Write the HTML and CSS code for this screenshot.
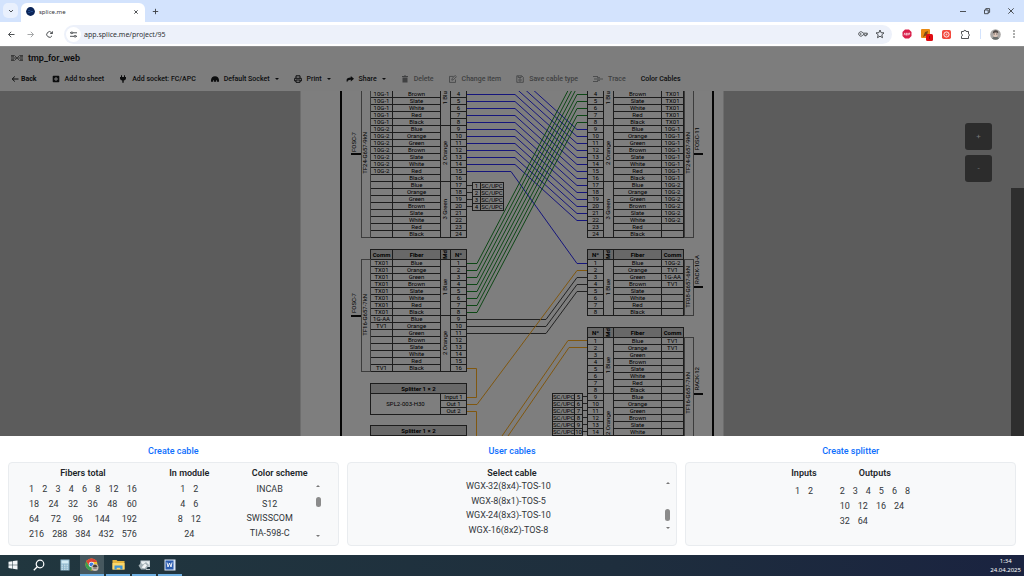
FILE: index.html
```html
<!DOCTYPE html>
<html lang="en">
<head>
<meta charset="utf-8">
<title>splice.me</title>
<link rel="stylesheet" href="styles.css">
</head>
<body>
<div class="tabs">
  <button class="tab-search" aria-label="Search tabs"><svg width="8" height="8" viewBox="0 0 8 8"><path class="ln" d="M2 3l2 2 2-2"/></svg></button>
  <div class="tab">
    <svg width="9" height="9" viewBox="0 0 9 9"><circle cx="4.500" cy="4.500" r="4.400" fill="#0b2559"/><path d="M2 3.500h2l1 1h2M2 5.500h2l1-1" stroke="#2f5fa8" stroke-width=".6" fill="none"/></svg>
    <span class="tab-name">splice.me</span>
    <button aria-label="Close tab"><svg width="8" height="8" viewBox="0 0 8 8"><path class="ln" d="M2.300 2.300l3.400 3.400M5.700 2.300L2.300 5.700"/></svg></button>
  </div>
  <button class="tab-new" aria-label="New tab"><svg width="9" height="9" viewBox="0 0 9 9"><path class="ln" d="M4.500 1.800v5.400M1.800 4.500h5.400"/></svg></button>
  <div class="win">
    <button aria-label="Minimize"><svg width="8" height="8" viewBox="0 0 8 8"><path class="ln" d="M1 4.500h6"/></svg></button>
    <button aria-label="Restore"><svg width="8" height="8" viewBox="0 0 8 8"><path class="ln" d="M1.500 3h3.700v3.700H1.500zM2.800 3V1.600h3.800v3.800H5.200"/></svg></button>
    <button aria-label="Close"><svg width="8" height="8" viewBox="0 0 8 8"><path class="ln" d="M1.300 1.300l5.400 5.400M6.700 1.300L1.300 6.700"/></svg></button>
  </div>
</div>

<div class="nav">
  <div class="nav-btns">
    <button aria-label="Back"><svg width="9" height="9" viewBox="0 0 9 9"><path class="ln" d="M7.500 4.500H1.700M4.200 1.800L1.500 4.500l2.700 2.700"/></svg></button>
    <button aria-label="Forward" class="dim"><svg width="9" height="9" viewBox="0 0 9 9"><path class="ln" d="M1.500 4.500h5.800M4.800 1.800l2.700 2.700-2.700 2.700"/></svg></button>
    <button aria-label="Reload"><svg width="9" height="9" viewBox="0 0 9 9"><path class="ln" d="M7 5.800A2.800 2.800 0 1 1 6.600 2.600L7.300 3.400M7.400 1.300v2.200H5.200"/></svg></button>
  </div>
  <div class="url">
    <span class="site"><svg width="9" height="9" viewBox="0 0 9 9"><path class="ln" d="M1 2.800h1M4 2.800h4M1 6.300h4M7 6.300h1"/><circle class="ln" cx="2.900" cy="2.800" r=".9"/><circle class="ln" cx="6.100" cy="6.300" r=".9"/></svg></span>
    <input aria-label="Address" value="app.splice.me/project/95">
    <svg width="11" height="8" viewBox="0 0 11 8"><path class="ln" d="M6 3.200h4.300v1.500H9.200v1.100H7.800V4.700H6A2.200 2.200 0 1 1 6 3.200z"/><circle cx="3.700" cy="4" r=".8" fill="#444746"/></svg>
    <svg width="10" height="10" viewBox="0 0 10 10"><path class="ln" d="M5 1l1.100 2.700 2.900.2-2.200 1.900.7 2.900L5 7.200 2.500 8.700l.7-2.900L1 3.900l2.900-.2z"/></svg>
  </div>
  <div class="ext">
    <svg width="10" height="10" viewBox="0 0 10 10"><path d="M3 .6h4L9.500 3v4L7 9.400H3L.5 7V3z" fill="#d91f4a"/><path d="M2 6.300l.8-2.400.8 2.400M4.500 4v2.200h.8V4zM6.700 6.300V4h1v1.200h-1" stroke="#fff" stroke-width=".6" fill="none"/></svg>
    <svg width="12" height="13" viewBox="0 0 12 13"><rect y="1" width="9" height="9" rx="1" fill="#e98a12"/><path d="M2 9l2-5 3-1-1 4z" fill="#7b4a16"/><rect x="5" y="6" width="7" height="7" rx="1.500" fill="#e00d13"/><path d="M8.500 8v3" stroke="#7c0a0c" stroke-width=".8"/></svg>
    <svg width="9" height="9" viewBox="0 0 9 9"><rect width="9" height="9" rx="1.800" fill="#f2493d"/><circle cx="4.500" cy="4.500" r="2.600" fill="none" stroke="#fff" stroke-width=".9"/><circle cx="4.500" cy="4.500" r="1" fill="#fbb"/></svg>
    <svg width="11" height="11" viewBox="0 0 11 11"><path class="ln" d="M1.500 2.500h2.200a1.200 1.200 0 0 1 2.400 0h2.400v2.400a1.200 1.200 0 0 1 0 2.300v2.300h-7V7.400a1.400 1.400 0 0 0 0-2.600z"/></svg>
    <span class="sep"></span>
    <svg width="11" height="11" viewBox="0 0 11 11"><circle cx="5.500" cy="5.500" r="5.300" fill="#aaa8a6"/><path d="M2 9.500Q5.500 5 9 9.500Q5.500 12 2 9.500z" fill="#696e6c"/><ellipse cx="5.500" cy="5.200" rx="2.300" ry="2.900" fill="#dcc5b8"/><path d="M2.800 4.500Q3 1.200 5.800 1.300 8.500 1.400 8.200 4.300 6 2.600 2.800 4.500z" fill="#4d4643"/><path d="M3.500 5h1.500M6 5h1.500" stroke="#444" stroke-width=".7"/></svg>
    <button aria-label="Menu"><svg width="8" height="10" viewBox="0 0 8 10"><g fill="#444746"><circle cx="4" cy="2" r=".8"/><circle cx="4" cy="5" r=".8"/><circle cx="4" cy="8" r=".8"/></g></svg></button>
  </div>
</div>

<header class="app-head">
  <div class="brand">
    <svg width="12" height="8" viewBox="0 0 12 8"><path d="M0 1.500h3.500L8.500 6.500H12M0 6.500h3.500L8.500 1.500H12M0 4h4M8 4h4M0 2.700h3M9 2.700h3M0 5.300h3M9 5.300h3M4 4h4" stroke="#3c3c3c" fill="none"/></svg>
    <h1>tmp_for_web</h1>
  </div>
  <div class="tools">
    <button class="strong"><svg width="8" height="8" viewBox="0 0 8 8"><path d="M7.500 4h-6M3.800 1.500L1.200 4l2.600 2.500" stroke="currentColor" fill="none"/></svg>Back</button>
    <button><svg width="8" height="8" viewBox="0 0 8 8"><path fill-rule="evenodd" fill="currentColor" d="M1.500.7h5q.8 0 .8.800v5q0 .8-.8.800h-5q-.8 0-.8-.8v-5q0-.8.8-.8zM3.500 2v1.500H2v1h1.500V6h1V4.500H6v-1H4.500V2z"/></svg>Add to sheet</button>
    <button><svg width="8" height="8" viewBox="0 0 8 8"><path fill="currentColor" d="M2 .3h1V2h2V.3h1V2h1v1.500Q6.700 5.300 4.700 5.500V7.700H3.300V5.500Q1.300 5.300 1 3.500V2h1z"/></svg>Add socket: FC/APC</button>
    <button><svg width="8" height="8" viewBox="0 0 8 8"><path fill="currentColor" d="M0 6.800V5Q.3 1.200 4 1.200T8 5v1.800H5.800V5.200H5v1.600H3V5.200h-.8v1.600z"/></svg>Default Socket<i></i></button>
    <button><svg width="8" height="8" viewBox="0 0 8 8"><path fill="none" stroke="currentColor" d="M2 3V.8h4V3M2 6H.7V3.300h6.600V6H6M2 5h4v2.300H2z"/></svg>Print<i></i></button>
    <button><svg width="8" height="8" viewBox="0 0 8 8"><path fill="currentColor" d="M4.800 1l3.200 2.700-3.200 2.700V4.700Q1.500 4.400 1 7.200-.8 2.700 4.800 2.600z"/></svg>Share<i></i></button>
    <button class="off"><svg width="8" height="8" viewBox="0 0 8 8"><path fill="currentColor" d="M1 1h2V.4h2V1h2v1H1zM1.500 2.500h5V7.600h-5z"/></svg>Delete</button>
    <button class="off"><svg width="8" height="8" viewBox="0 0 8 8"><path fill="none" stroke="currentColor" stroke-width=".8" d="M4.500 1.400h-4v6h6V4.500M3 3.600L6.200.5l1.200 1.200L4.200 4.900 2.800 5.200z"/></svg>Change item</button>
    <button class="off"><svg width="8" height="8" viewBox="0 0 8 8"><path fill="none" stroke="currentColor" stroke-width=".8" d="M.8.800h5L7.300 2.300v5H.8zM2.200 1v1.500h3V1"/><circle cx="4" cy="5" r="1.200" fill="none" stroke="currentColor" stroke-width=".8"/></svg>Save cable type</button>
    <button class="off"><svg width="10" height="8" viewBox="0 0 10 8"><path fill="none" stroke="currentColor" stroke-width=".8" d="M0 1.500h5M1 4h9M0 6.500h5M4 2.700h3M4 5.300h3"/></svg>Trace</button>
    <button>Color Cables</button>
  </div>
</header>

<main class="stage">
  <div class="sheet" id="sheet"></div>
  <div class="zoom"><button>+</button><button>-</button></div>
  <div class="side"></div>
</main>

<section class="panels">
  <div class="panel">
    <h2>Create cable</h2>
    <div class="card cable">
      <div class="col">
        <h3>Fibers total</h3>
        <div class="nums wide" data-rows="1 2 3 4 6 8 12 16|18 24 32 36 48 60|64 72 96 144 192|216 288 384 432 576"></div>
      </div>
      <div class="col">
        <h3>In module</h3>
        <div class="nums" data-rows="1 2|4 6|8 12|24"></div>
      </div>
      <div class="col">
        <h3>Color scheme</h3>
        <div class="scroller scheme">
          <div class="list"><button>INCAB</button><button>S12</button><button>SWISSCOM</button><button>TIA-598-C</button></div>
          <div class="bar"><b class="up"></b><span class="thumb"></span><b class="down"></b></div>
        </div>
      </div>
    </div>
  </div>
  <div class="panel">
    <h2>User cables</h2>
    <div class="card">
      <div class="col">
        <h3>Select cable</h3>
        <div class="scroller user">
          <div class="list"><button>WGX-32(8x4)-TOS-10</button><button>WGX-8(8x1)-TOS-5</button><button>WGX-24(8x3)-TOS-10</button><button>WGX-16(8x2)-TOS-8</button></div>
          <div class="bar"><b class="up"></b><span class="thumb low"></span><b class="down"></b></div>
        </div>
      </div>
    </div>
  </div>
  <div class="panel">
    <h2>Create splitter</h2>
    <div class="card splitter">
      <div class="col">
        <h3>Inputs</h3>
        <div class="nums" data-rows="1 2"></div>
      </div>
      <div class="col">
        <h3>Outputs</h3>
        <div class="nums start" data-rows="2 3 4 5 6 8|10 12 16 24|32 64"></div>
      </div>
    </div>
  </div>
</section>

<footer class="taskbar">
  <button aria-label="Start"><svg width="10" height="10" viewBox="0 0 10 10"><path fill="#f2f6f8" d="M.5 1.800L4.500 1.200v3.500h-4zM5 1.100L9.500.500v4.200H5zM.5 5.200h4v3.500l-4-.6zM5 5.200h4.500v4.300L5 8.800z"/></svg></button>
  <button aria-label="Search"><svg width="12" height="12" viewBox="0 0 12 12"><circle cx="7" cy="5" r="3.800" fill="none" stroke="#fff" stroke-width="1.200"/><path d="M4.300 7.700L.8 11.200" stroke="#fff" stroke-width="1.300"/></svg></button>
  <button aria-label="Calculator"><svg width="10" height="12" viewBox="0 0 10 12"><rect x=".5" y=".5" width="9" height="11" fill="#8fb7cd"/><rect x="1.500" y="1.500" width="7" height="3" fill="#d3ecf5"/><path d="M1.500 6.200h7M1.500 8.200h7M1.500 10.200h7" stroke="#d7e7ee" stroke-dasharray="1.500 1"/></svg></button>
  <button aria-label="Chrome" class="run active"><svg width="14" height="14" viewBox="0 0 14 14"><circle cx="6.500" cy="6.500" r="6" fill="#f2c02e"/><path d="M1.300 3.500A6 6 0 0 1 12 4H6.500L4 8z" fill="#df4537"/><path d="M1.300 3.500A6 6 0 0 0 6 12.500L8.500 8H4z" fill="#3a9e4f"/><circle cx="6.500" cy="6.500" r="2.700" fill="#fff"/><circle cx="6.500" cy="6.500" r="2.100" fill="#3e7de0"/><circle cx="10" cy="9.500" r="3.500" fill="#c7bdb5"/><path d="M7.500 9Q8 6.500 10 6.500t2.500 2.500z" fill="#473f3b"/><path d="M8.300 10h3.400" stroke="#333" stroke-width=".8"/></svg></button>
  <button aria-label="Explorer" class="run"><svg width="13" height="11" viewBox="0 0 13 11"><path d="M.5 1h4l1 1h7v8.500H.5z" fill="#e7b53d"/><path d="M.5 4h12v6.500H.5z" fill="#fbd76b"/><path d="M2.500 10.500v-4h8v4H8.300V8.700H4.700v1.800z" fill="#3f94d6"/></svg></button>
  <button aria-label="Viewer" class="run"><svg width="13" height="12" viewBox="0 0 13 12"><path d="M2.500 1.500h9.500v6.500H2.500z" fill="#c3ced4"/><path d="M3.500 2.500h7.500v4H3.500z" fill="#e9eff1"/><path d="M.5 6.500L3 4l2 1.500L8 3l3 3-3 4.500H3z" fill="#a2afb5"/><path d="M3.500 8.500L7 4.500l2 2-2.500 3z" fill="#f1f4f5"/><path d="M8 10.500h4" stroke="#b8c2c7"/></svg></button>
  <button aria-label="Word" class="run"><svg width="12" height="12" viewBox="0 0 12 12"><rect x=".5" y=".5" width="11" height="11" fill="#dbe6f6"/><rect x="1.500" y="1.500" width="8" height="9" fill="#2b5cb0"/><path d="M3 3.500l1 4.500 1.500-4L7 8l1-4.500" stroke="#fff" fill="none" stroke-width=".9"/></svg></button>
  <div class="clock"><span>1:34</span><span>24.04.2025</span></div>
</footer>
<script src="app.js"></script>
</body>
</html>
```

FILE: styles.css
```css
* { box-sizing: border-box; }
html, body { height: 100%; }
body {
  margin: 0;
  display: flex;
  flex-direction: column;
  overflow: hidden;
  font-family: Roboto, "Liberation Sans", sans-serif;
  font-size: 9px;
  color: #212529;
  background: #fff;
}
button { font: inherit; color: inherit; background: none; border: 0; padding: 0; display: flex; align-items: center; justify-content: center; }
svg { display: block; flex: none; }
h1, h2, h3 { margin: 0; font-size: 9px; font-weight: 500; line-height: 12px; }
h1, h3 { font-weight: 600; }
.ln { fill: none; stroke: #3c4043; stroke-width: 0.9; }

/* browser window */
.tabs { display: flex; flex: none; height: 22px; background: #d3e3fd; padding-left: 3px; }
.tab-search { width: 15px; height: 15px; margin: 3px 3px 0 0; border-radius: 5px; background: #e9f0fd; }
.tab { display: flex; align-items: center; width: 124px; margin-top: 3px; padding: 0 5px 2px 5px; gap: 4px; background: #fff; border-radius: 6px 6px 0 0; }
.tab-name { flex: 1; font: 6px "Noto Sans", sans-serif; color: #303236; }
.tab-new { width: 21px; }
.win { display: flex; margin-left: auto; padding-right: 9px; gap: 16px; }
.nav { display: flex; flex: none; align-items: center; height: 24px; background: #fff; padding: 0 6px 0 7px; }
.nav-btns { display: flex; gap: 10px; width: 57px; }
.dim { opacity: 0.5; }
.url { display: flex; flex: 1; align-items: center; height: 19px; gap: 7px; padding: 0 7px 0 2px; border-radius: 10px; background: #edf1fa; }
.site { display: flex; align-items: center; justify-content: center; width: 15px; height: 15px; border-radius: 8px; background: #fff; }
.url input { flex: 1; min-width: 0; border: 0; padding: 0; margin-left: -4px; background: none; color: #303236; font: 7px "Noto Sans", sans-serif; }
.ext { display: flex; align-items: center; gap: 9px; padding-left: 10px; }
.sep { width: 1px; height: 10px; background: #d3e3fd; }

/* project header */
.app-head { flex: none; height: 45px; padding: 0 11px; background: #7d7d7d; border-top: 1px solid #8c8c8c; color: #0c0d0e; }
.brand { display: flex; align-items: center; gap: 5px; height: 22px; }
.tools { display: flex; align-items: center; gap: 15px; height: 19px; font-size: 7px; font-weight: 500; white-space: nowrap; }
.tools button { gap: 5px; }
.tools i { border: 2px solid transparent; border-top-color: currentColor; border-bottom: 0; }
.tools .strong { gap: 2px; font-weight: 700; }
.tools .off { color: #404142; }

/* drawing */
.stage { position: relative; flex: 1; min-height: 0; overflow: hidden; display: flex; justify-content: center; background: #5c5c5c; }
.sheet { position: relative; width: 424px; background: #7e7e7e; border: solid #6d6d6d; border-width: 0 1px; font-size: 6px; color: #000; }
.wires { position: absolute; left: -1px; top: 0; }
.wires path { fill: none; stroke: #222; }
.wires .frame { stroke: #050505; stroke-width: 2; }
.wires .blue { stroke: #15157c; }
.wires .green { stroke: #0d4715; }
.wires .orange { stroke: #80570f; }
.wires .tick { stroke: #080808; stroke-width: 2; }
.node { position: absolute; table-layout: fixed; border: solid #1c1c1c; border-width: 1px 0 0 1px; border-spacing: 0; }
.node td, .node th { padding: 0; height: 7px; line-height: 6px; border: solid #1c1c1c; border-width: 0 1px 1px 0; text-align: center; white-space: nowrap; font-weight: 400; overflow: visible; }
.node thead th { height: 10px; line-height: 9px; background: #686868; font-weight: 700; }
.vert { writing-mode: vertical-rl; transform: rotate(180deg); line-height: 8px; display: block; width: 8px; }
.node .cut-top { vertical-align: top; }
.cut-top .vert { margin-top: -3px; }
.node .cut-bottom { vertical-align: bottom; }
.bracket { position: absolute; width: 10px; border: 1px solid #3c3c3c; }
.name { position: absolute; display: flex; align-items: center; justify-content: center; width: 10px; white-space: nowrap; }
.zoom { position: absolute; right: 32px; top: 32px; display: grid; gap: 5px; }
.zoom button { width: 27px; height: 27px; border-radius: 3px; background: #2c2c2c; color: #777; font-size: 8px; }
.side { position: absolute; right: 0; top: 97px; bottom: 0; width: 13px; background: #2e2e2e; }

/* item panels */
.panels { flex: none; display: grid; grid-template-columns: 1fr 1fr 1fr; gap: 8px; padding: 9px 8px 9px; background: #fff; }
h2 { text-align: center; color: #0d6efd; }
.card { display: grid; height: 84px; margin-top: 5px; padding-top: 4px; border: 1px solid #e9ecef; border-radius: 4px; background: #f8f9fa; }
.cable { grid-template-columns: 148fr 65fr 116fr; }
.splitter { grid-template-columns: auto auto; justify-content: center; gap: 23px; }
h3 { text-align: center; }
.nums { display: grid; padding-top: 2px; color: #33373b; }
.nums div { display: flex; justify-content: center; gap: 8px; height: 15px; }
.wide { width: 108px; margin: 0 auto; }
.wide div { justify-content: space-between; gap: 0; }
.splitter .nums { padding-top: 4px; }
.start div { justify-content: flex-start; }
.scroller { display: grid; grid-template-columns: 1fr 5px; color: #33373b; }
.scheme { padding: 3px 17px 0 2px; }
.user { padding: 0 6px 0 4px; }
.list { display: grid; height: 58px; }
.bar { display: flex; flex-direction: column; align-items: center; padding: 3px 0; }
.up { border: 2px solid transparent; border-bottom-color: #777; border-top: 0; }
.down { border: 2px solid transparent; border-top-color: #777; border-bottom: 0; margin-top: auto; }
.thumb { width: 5px; height: 10px; margin-top: 10px; border-radius: 3px; background: #8b8b8b; }
.low { height: 12px; margin-top: 25px; }
.user .bar { padding-bottom: 8px; }

/* taskbar */
.taskbar { display: flex; flex: none; height: 21px; background: linear-gradient(90deg, #21373f, #1e2e3d 60%, #1a2340); color: #fff; }
.taskbar button { width: 26px; border-bottom: 2px solid transparent; }
.taskbar .run { width: 24px; margin: 0 1px; border-bottom-color: #6fb0e3; }
.taskbar .active { margin-left: 2px; background: #46585f; }
.clock { display: flex; flex-direction: column; margin-left: auto; padding: 2px 3px 0 0; text-align: center; font: 6px/9px "Noto Sans", sans-serif; }
```

FILE: app.js
```js
const COLORS = ['Blue', 'Orange', 'Green', 'Brown', 'Slate', 'White', 'Red', 'Black'];
const sheet = document.getElementById('sheet');
const ROW = 7;

// Drawing coordinates are measured from the sheet's top left corner.
const rep = (value, n) => Array(n).fill(value);

function addTable(x, y, cols, html) {
  const table = document.createElement('table');
  table.className = 'node';
  table.style.left = x - 1 + 'px';
  table.style.top = y + 'px';
  table.style.width = cols.reduce((a, b) => a + b, 1) + 'px';
  table.innerHTML = '<colgroup>' + cols.map(w => `<col style="width:${w}px">`).join('') + '</colgroup>' + html;
  sheet.append(table);
}

// Only the rows inside the viewport are built, starting at fiber number `from`.
function cable({ x, y, comm, mirrored, from = 1 }) {
  const order = cells => (mirrored ? cells.reverse() : cells).join('');
  const last = from + comm.length - 1;
  let html = from === 1
    ? '<thead><tr>' + order(['<th>Comm</th>', '<th>Fiber</th>', '<th><span class="vert">Md</span></th>', '<th>Nº</th>']) + '</tr></thead>'
    : '';
  html += '<tbody>';
  comm.forEach((c, i) => {
    const n = from + i;
    const group = Math.floor((n - 1) / 8);
    let mod = '';
    if (i === 0 || n % 8 === 1) {
      const end = Math.min(group * 8 + 8, last);
      const cut = n % 8 !== 1 ? 'cut-top' : end % 8 ? 'cut-bottom' : '';
      mod = `<th class="${cut}" rowspan="${end - n + 1}"><span class="vert">${group + 1} ${COLORS[group]}</span></th>`;
    }
    html += '<tr>' + order([`<td>${c}</td>`, `<td>${COLORS[(n - 1) % 8]}</td>`, mod, `<td>${n}</td>`]) + '</tr>';
  });
  addTable(x, y, mirrored ? [16, 10, 48, 22] : [22, 48, 10, 16], html + '</tbody>');
}

function splitter(y, name, ports) {
  let html = '<thead><tr><th colspan="2">Splitter 1 × 2</th></tr></thead><tbody>';
  ports.forEach((p, i) => {
    html += '<tr>' + (i ? '' : `<td rowspan="3">${name}</td>`) + `<td>${p}</td></tr>`;
  });
  addTable(70, y, [70, 26], html + '</tbody>');
}

function box(cls, x, y, h, text = '') {
  const el = document.createElement('div');
  el.className = cls;
  el.style.left = x - 1 + 'px';
  el.style.top = y + 'px';
  el.style.height = h + 'px';
  if (text) el.innerHTML = `<span class="vert">${text}</span>`;
  sheet.append(el);
}

// Wires
let paths = '';
const wire = (cls, d) => { paths += `<path class="${cls}" d="${d}"/>`; };
wire('frame', 'M41 0V345M413 0V345');
for (let k = 0; k < 14; k++) {
  const y = -17.5 + ROW * k;
  wire('blue', `M167 ${y}H215L277 ${y + 56}H287`);
}
wire('blue', 'M167 80.500H211L277 172.500H287');
for (let k = 0; k < 8; k++) {
  wire('green', `M167 ${172.5 + ROW * k}H177L277 ${-17.5 + ROW * k}H287`);
}
for (let k = 0; k < 3; k++) {
  wire('', `M167 ${228.5 + ROW * k}H246L277 ${186.5 + ROW * k}H287`);
}
wire('orange', 'M167 277.500H176.500V306.500H167');
wire('orange', 'M167 313.500H177L277 179.500H287');
wire('orange', 'M167 320.500H176.500V345');
wire('orange', 'M287 249.500H268L202 345');
wire('orange', 'M287 256.500H269L208 345');
wire('tick', 'M51 63H61M51 225H61M393 63H403M393 196H403M393 303H403');
for (let k = 0; k < 4; k++) wire('', `M167 ${94.5 + ROW * k}H172`);
for (let k = 0; k < 6; k++) wire('', `M282 ${305.5 + ROW * k}H287`);
sheet.innerHTML = `<svg class="wires" width="424" height="345">${paths}</svg>`;

// Cables
cable({ x: 70, y: -1, from: 4, comm: [...rep('10G-1', 5), ...rep('10G-2', 7), ...rep('', 9)] });
cable({ x: 70, y: 158, comm: [...rep('TX01', 8), '1G-AA', 'TV1', ...rep('', 5), 'TV1'] });
cable({ x: 287, y: -1, from: 4, mirrored: true, comm: [...rep('TX01', 5), ...rep('10G-1', 8), ...rep('10G-2', 6), '', ''] });
cable({ x: 287, y: 158, mirrored: true, comm: ['10G-2', 'TV1', '1G-AA', 'TV1', '', '', '', ''] });
cable({ x: 287, y: 236, mirrored: true, comm: ['TV1', 'TV1', ...rep('', 12)] });
splitter(292, 'SPL2-003-H30', ['Input 1', 'Out 1', 'Out 2']);
addTable(70, 334, [96], '<thead><tr><th>Splitter 1 × 2</th></tr></thead>');

box('bracket', 61, -22, 169);
box('bracket', 61, 168, 113);
box('bracket', 384, -22, 169);
box('bracket', 384, 168, 57);
box('bracket', 384, 246, 113);
box('name', 60, 37, 50, 'TF24-G657-9kN');
box('name', 60, 199, 50, 'TF16-G657-7kN');
box('name', 383, 37, 50, 'TF24-G657-9kN');
box('name', 383, 171, 50, 'TF08-G657-6kN');
box('name', 383, 277, 50, 'TF16-G657-7kN');
box('name', 49, 41, 20, 'FOSC-7');
box('name', 49, 202, 20, 'FOSC-7');
box('name', 392, 36, 24, 'FOSC-11');
box('name', 392, 164, 30, 'RACK-10-A');
box('name', 392, 276, 24, 'RACK-12');

// Connectors
addTable(172, 91, [8, 23], [1, 2, 3, 4].map(n => `<tr><td>${n}</td><td>SC/UPC</td></tr>`).join(''));
addTable(252, 302, [22, 8], [5, 6, 7, 8, 9, 10].map(n => `<tr><td>SC/UPC</td><td>${n}</td></tr>`).join(''));

// Number pickers
document.querySelectorAll('[data-rows]').forEach(el => {
  el.innerHTML = el.dataset.rows.split('|')
    .map(r => '<div>' + r.split(' ').map(n => `<button>${n}</button>`).join('') + '</div>').join('');
});
```
